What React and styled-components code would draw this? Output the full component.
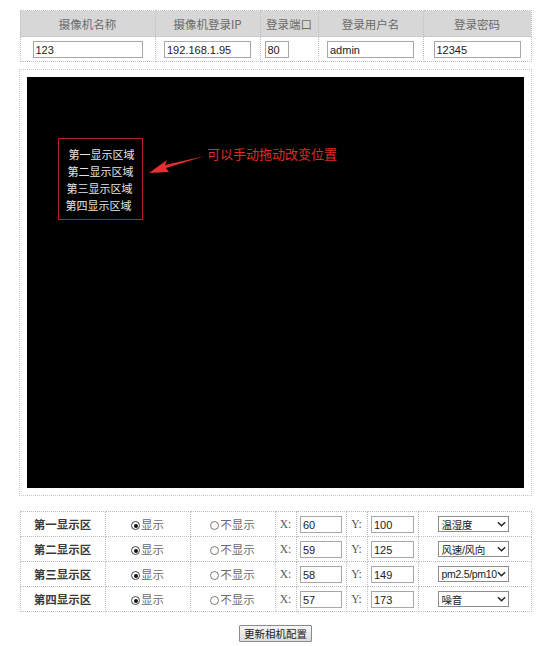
import React from "react";
import styled, { createGlobalStyle } from "styled-components";

const GlobalStyle = createGlobalStyle`
  html, body { margin: 0; padding: 0; background: #fff; }
  body { font-family: "Liberation Sans", "Noto Sans CJK SC", sans-serif; }
`;

const Page = styled.div`
  width: 550px;
  padding-top: 10px;
  display: flex;
  flex-direction: column;
  align-items: center;
`;

const Table = styled.table`
  width: 511px;
  margin-left: 1px;
  border-collapse: collapse;
  table-layout: fixed;
  td, th { border: 1px dotted #bdbdbd; padding: 0; }
`;

const HeadCell = styled.th`
  height: 25px;
  background: #d7d7d7;
  font-family: "Noto Sans CJK SC", sans-serif;
  font-weight: normal;
  font-size: 11.5px;
  color: #6a6a6a;
  text-align: center;
`;

const Cell = styled.td`
  height: 24px;
  text-align: ${(p) => p.$align || "center"};
  padding-left: ${(p) => p.$pl || 0}px !important;
`;

const TextBox = styled.input`
  box-sizing: border-box;
  width: ${(p) => p.$w}px;
  height: 17px;
  border: 1px solid #a8a8a8;
  padding: 0 2px;
  font-family: "Liberation Sans", sans-serif;
  font-size: 11px;
  color: #222;
  vertical-align: middle;
  outline: none;
`;

const Frame = styled.div`
  margin-top: 7px;
  margin-left: 1px;
  width: 497px;
  padding: 7px;
  border: 1px dotted #c4c4c4;
`;

const Screen = styled.div`
  position: relative;
  height: 411px;
  background: #000;
`;

const Zones = styled.div`
  position: absolute;
  left: 31px;
  top: 61px;
  width: 83px;
  height: 80px;
  border: 1px solid #b52020;
  display: flex;
  flex-direction: column;
  align-items: center;
  justify-content: center;
  gap: 1px;
`;

const ZoneLine = styled.div`
  font-family: "Noto Sans CJK SC", sans-serif;
  font-size: 11px;
  line-height: 16px;
  color: #e6e6e6;
  margin-left: ${(p) => p.$shift}px;
`;

const Hint = styled.div`
  position: absolute;
  left: 180px;
  top: 67px;
  font-family: "Noto Sans CJK SC", sans-serif;
  font-size: 13px;
  color: #e02a2a;
`;

const Arrow = styled.svg`
  position: absolute;
  left: 120px;
  top: 78px;
`;

const BottomTable = styled(Table)`
  margin-top: 15px;
`;

const Label = styled.td`
  height: 24px;
  text-align: center;
  font-family: "Noto Sans CJK SC", sans-serif;
  font-weight: bold;
  font-size: 11.5px;
  color: #3a3a3a;
`;

const OptCell = styled.td`
  text-align: center;
  font-family: "Noto Sans CJK SC", sans-serif;
  font-size: 11.5px;
  color: #6a6a6a;
`;

const Radio = styled.span`
  display: inline-block;
  box-sizing: border-box;
  width: 9px;
  height: 9px;
  border-radius: 50%;
  border: 1px solid ${(p) => (p.$on ? "#444" : "#777")};
  margin-right: 1px;
  vertical-align: -1px;
  position: relative;
  &::after {
    content: "";
    display: ${(p) => (p.$on ? "block" : "none")};
    position: absolute;
    left: 1.5px;
    top: 1.5px;
    width: 4px;
    height: 4px;
    border-radius: 50%;
    background: #111;
  }
`;

const Axis = styled.td`
  text-align: center;
  font-family: "Liberation Serif", serif;
  font-size: 11.5px;
  color: #555;
`;

const Select = styled.div`
  box-sizing: border-box;
  width: 71px;
  height: 16px;
  margin-left: 19px;
  border: 1px solid #8c8c8c;
  display: flex;
  align-items: center;
  justify-content: space-between;
  padding: 0 2px 0 3px;
  font-family: "Liberation Sans", "Noto Sans CJK SC", sans-serif;
  font-size: 10.5px;
  letter-spacing: -0.3px;
  color: #222;
  white-space: nowrap;
  overflow: hidden;
  svg { flex-shrink: 0; }
`;

const Button = styled.button`
  margin-top: 13px;
  margin-left: 1px;
  height: 17px;
  padding: 0 4px;
  border: 1px solid #8a8a8a;
  border-radius: 1px;
  background: linear-gradient(#f6f6f6, #dcdcdc);
  font-family: "Noto Sans CJK SC", sans-serif;
  font-size: 10.5px;
  color: #222;
  line-height: 13px;
`;

const Chevron = () => (
  <svg width="9" height="6" viewBox="0 0 10 6">
    <path d="M1 1 L5 5 L9 1" fill="none" stroke="#222" strokeWidth="1.6" />
  </svg>
);

const camera = [
  { w: 110, v: "123" },
  { w: 87, v: "192.168.1.95" },
  { w: 24, v: "80", align: "left", pl: 4 },
  { w: 87, v: "admin" },
  { w: 87, v: "12345" },
];

const zones = [
  { name: "第一显示区", x: 60, y: 100, opt: "温湿度" },
  { name: "第二显示区", x: 59, y: 125, opt: "风速/风向" },
  { name: "第三显示区", x: 58, y: 149, opt: "pm2.5/pm10" },
  { name: "第四显示区", x: 57, y: 173, opt: "噪音" },
];

export default function App() {
  return (
    <>
      <GlobalStyle />
      <Page>
        <Table>
          <colgroup>
            <col style={{ width: 135 }} />
            <col style={{ width: 105 }} />
            <col style={{ width: 58 }} />
            <col style={{ width: 105 }} />
            <col style={{ width: 108 }} />
          </colgroup>
          <thead>
            <tr>
              <HeadCell>摄像机名称</HeadCell>
              <HeadCell>摄像机登录IP</HeadCell>
              <HeadCell>登录端口</HeadCell>
              <HeadCell>登录用户名</HeadCell>
              <HeadCell>登录密码</HeadCell>
            </tr>
          </thead>
          <tbody>
            <tr>
              {camera.map((c, i) => (
                <Cell key={i} $align={c.align} $pl={c.pl}>
                  <TextBox $w={c.w} defaultValue={c.v} />
                </Cell>
              ))}
            </tr>
          </tbody>
        </Table>

        <Frame>
          <Screen>
            <Zones>
              <ZoneLine $shift={2}>第一显示区域</ZoneLine>
              <ZoneLine $shift={0}>第二显示区域</ZoneLine>
              <ZoneLine $shift={-2}>第三显示区域</ZoneLine>
              <ZoneLine $shift={-4}>第四显示区域</ZoneLine>
            </Zones>
            <Arrow width="60" height="24" viewBox="0 0 60 24">
              <path
                d="M58 1 L18 10 L20 5 L2 18 L22 17 L19 13 Z"
                fill="#e53030"
              />
            </Arrow>
            <Hint>可以手动拖动改变位置</Hint>
          </Screen>
        </Frame>

        <BottomTable>
          <colgroup>
            <col style={{ width: 85 }} />
            <col style={{ width: 85 }} />
            <col style={{ width: 85 }} />
            <col style={{ width: 21 }} />
            <col style={{ width: 50 }} />
            <col style={{ width: 21 }} />
            <col style={{ width: 51 }} />
            <col style={{ width: 113 }} />
          </colgroup>
          <tbody>
            {zones.map((z) => (
              <tr key={z.name}>
                <Label>{z.name}</Label>
                <OptCell>
                  <Radio $on />显示
                </OptCell>
                <OptCell>
                  <Radio />不显示
                </OptCell>
                <Axis>X:</Axis>
                <Cell>
                  <TextBox $w={42} defaultValue={z.x} />
                </Cell>
                <Axis>Y:</Axis>
                <Cell>
                  <TextBox $w={43} defaultValue={z.y} />
                </Cell>
                <Cell $align="left">
                  <Select>
                    <span>{z.opt}</span>
                    <Chevron />
                  </Select>
                </Cell>
              </tr>
            ))}
          </tbody>
        </BottomTable>

        <Button>更新相机配置</Button>
      </Page>
    </>
  );
}
